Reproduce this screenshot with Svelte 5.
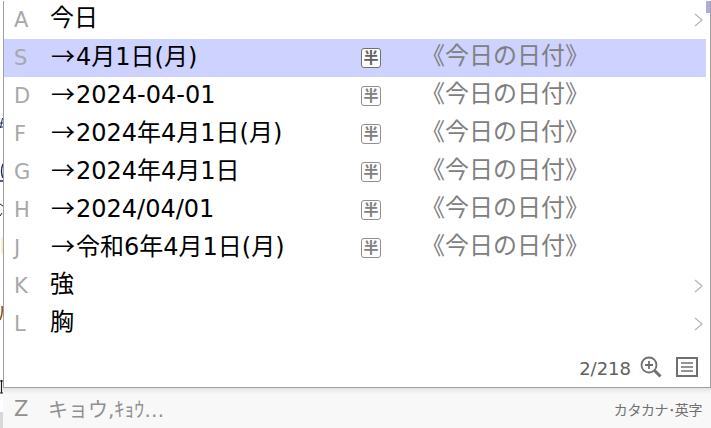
<script lang="ts">
  interface Row {
    key: string;
    label: string;
    half?: boolean;
    more?: boolean;
    active?: boolean;
  }

  const rows: Row[] = [
    { key: "A", label: "今日", more: true },
    { key: "S", label: "4月1日(月)", half: true, active: true },
    { key: "D", label: "2024-04-01", half: true },
    { key: "F", label: "2024年4月1日(月)", half: true },
    { key: "G", label: "2024年4月1日", half: true },
    { key: "H", label: "2024/04/01", half: true },
    { key: "J", label: "令和6年4月1日(月)", half: true },
    { key: "K", label: "強", more: true },
    { key: "L", label: "胸", more: true },
  ];
</script>

<div class="screen">
  <!-- slivers of the document behind the candidate window -->
  <svg class="behind" viewBox="0 0 3 428" aria-hidden="true" fill="none">
    <path d="M2.5 118L0.5 128M0 123h3M0 127h3" stroke="#1a2a50" stroke-width="1" />
    <path d="M3 164Q0 171 3 178M0 181h3" stroke="#142a60" stroke-width="1.4" />
    <path d="M0 204l3 2M2 213l-2 3" stroke="#222" stroke-width="1" />
    <path d="M2 238v16" stroke="#f4eeb8" stroke-width="1.4" />
    <path d="M2 306Q3 314 0 320" stroke="#8a5a20" stroke-width="1.6" />
    <path d="M1.5 380v13M0 381h3M0 393h3" stroke="#1a1a1a" stroke-width="1.2" />
    <rect x="0" y="412" width="3" height="16" fill="#d8d8d8" />
  </svg>

  <div class="popup">
    <div class="scroll-thumb"></div>
    <ul class="list">
      {#each rows as row (row.key)}
        <li class="row" class:active={row.active} class:candidate={row.half}>
          <span class="key">{row.key}</span>
          <span class="label">
            {#if row.half}<span class="arrow">→</span>{/if}{row.label}
          </span>
          {#if row.half}
            <span class="half">半</span>
            <span class="note">《今日の日付》</span>
          {/if}
          {#if row.more}
            <svg class="more" viewBox="0 0 9 14" aria-hidden="true">
              <path d="M1 1l7 6-7 6" fill="none" stroke="#b4b4b4" stroke-width="1.2" />
            </svg>
          {/if}
        </li>
      {/each}
    </ul>
    <div class="footer">
      <span class="count">2/218</span>
      <svg class="icon" viewBox="0 0 24 24" aria-hidden="true" fill="none" stroke="#707070">
        <circle cx="10" cy="10" r="7.5" stroke-width="1.8" />
        <path d="M10 6v8M6 10h8" stroke-width="1.8" />
        <path d="M15.5 15.5l6 6" stroke-width="3" />
      </svg>
      <svg class="icon list-icon" viewBox="0 0 22 20" aria-hidden="true" fill="none" stroke="#707070">
        <rect x="1" y="1" width="20" height="18" stroke-width="2" />
        <path d="M5 6h12M5 10h12M5 14h12" stroke-width="1.6" />
      </svg>
    </div>
  </div>
  <div class="status">
    <span class="key">Z</span>
    <span class="reading">キョウ,ｷｮｳ…</span>
    <span class="mode">カタカナ･英字</span>
  </div>
</div>

<style>
  :global(body) {
    margin: 0;
    background: #fff;
  }

  .screen {
    position: relative;
    width: 711px;
    height: 428px;
    overflow: hidden;
    font-family: "DejaVu Sans", "Noto Sans CJK JP", sans-serif;
    background: #fff;
  }

  .behind {
    position: absolute;
    left: 0;
    top: 0;
    width: 3px;
    height: 428px;
  }

  .popup {
    position: relative;
    box-sizing: border-box;
    width: 708px;
    height: 387px;
    margin-left: 3px;
    background: #fff;
    border-left: 1px solid #a0a0a0;
    border-right: 1px solid #a0a0a0;
    border-bottom: 1px solid #a0a0a0;
  }

  .scroll-thumb {
    position: absolute;
    top: 0;
    right: 0;
    width: 4px;
    height: 12px;
    background: #a9aedd;
  }

  .list {
    margin: 1px 4px 0 0;
    padding: 0;
    list-style: none;
  }

  .row {
    display: flex;
    align-items: center;
    height: 38px;
    color: #000;
    font-size: 24px;
    white-space: nowrap;
  }

  .row.active {
    background: #cdd2ff;
  }

  .key {
    width: 46px;
    padding-left: 10px;
    box-sizing: border-box;
    flex: none;
    color: #a8a8a8;
    font-size: 21px;
    font-family: "DejaVu Sans", sans-serif;
  }

  .label {
    width: 311px;
    flex: none;
    height: 38px;
    margin-top: -4px;
    line-height: 38px;
  }

  .candidate .label {
    margin-top: -6px;
  }

  .arrow {
    display: inline-block;
    width: 26px;
    padding-left: 1px;
    box-sizing: border-box;
    font-family: "Noto Sans CJK JP", sans-serif;
  }

  .half {
    box-sizing: border-box;
    display: flex;
    align-items: center;
    justify-content: center;
    width: 20px;
    height: 20px;
    flex: none;
    border: 1px solid #909090;
    border-radius: 3px;
    background: #fff;
    color: #808080;
    font-size: 15px;
    font-weight: 700;
    line-height: 1;
  }

  .active .half {
    border-color: #707070;
    color: #606060;
  }

  .note {
    height: 38px;
    margin-top: -8px;
    margin-left: 40px;
    color: #808080;
    font-family: "Noto Sans CJK JP", sans-serif;
    font-size: 24px;
    line-height: 38px;
  }

  .more {
    width: 9px;
    height: 14px;
    margin-left: auto;
    margin-right: 3px;
  }

  .footer {
    position: absolute;
    right: 12px;
    bottom: 8px;
    display: flex;
    align-items: center;
  }

  .count {
    margin-right: 8px;
    margin-top: 3px;
    color: #606060;
    font-size: 18px;
  }

  .icon {
    width: 24px;
    height: 24px;
  }

  .list-icon {
    width: 22px;
    height: 20px;
    margin-left: 13px;
  }

  .status {
    position: relative;
    display: flex;
    align-items: center;
    height: 41px;
    margin-left: 3px;
    background: linear-gradient(#e4e4e4, #f8f8f8 6px);
  }

  .status .key {
    width: 45px;
    padding-left: 11px;
    color: #909090;
  }

  .reading {
    color: #909090;
    font-size: 20px;
  }

  .mode {
    margin-left: auto;
    margin-right: 9px;
    color: #707070;
    font-size: 14px;
    letter-spacing: -0.4px;
  }
</style>
